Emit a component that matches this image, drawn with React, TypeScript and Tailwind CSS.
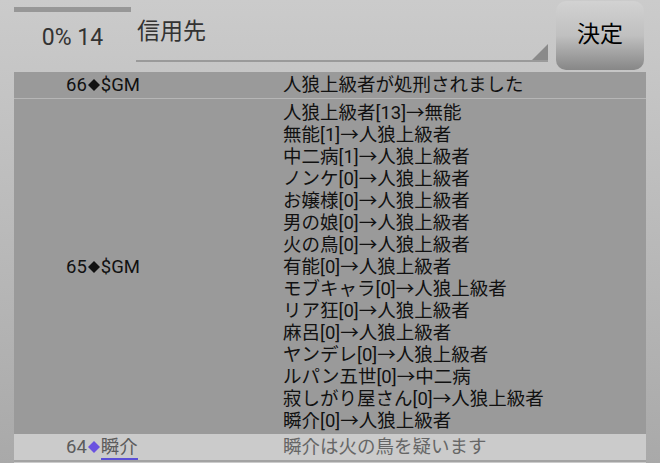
const VOTES = [
  "人狼上級者[13]→無能",
  "無能[1]→人狼上級者",
  "中二病[1]→人狼上級者",
  "ノンケ[0]→人狼上級者",
  "お嬢様[0]→人狼上級者",
  "男の娘[0]→人狼上級者",
  "火の鳥[0]→人狼上級者",
  "有能[0]→人狼上級者",
  "モブキャラ[0]→人狼上級者",
  "リア狂[0]→人狼上級者",
  "麻呂[0]→人狼上級者",
  "ヤンデレ[0]→人狼上級者",
  "ルパン五世[0]→中二病",
  "寂しがり屋さん[0]→人狼上級者",
  "瞬介[0]→人狼上級者",
];

const FONT = "font-['Roboto','Noto_Sans_CJK_JP',sans-serif]";

// small filled diamond used between the number and the speaker name
function Diamond({ className = "" }: { className?: string }) {
  return (
    <svg viewBox="0 0 12 12" className={`inline-block w-[12px] h-[12px] mx-px align-[0px] ${className}`}>
      <polygon points="6,0 12,6 6,12 0,6" fill="currentColor" />
    </svg>
  );
}

export default function App() {
  return (
    <div className={`w-[660px] h-[463px] overflow-hidden bg-gradient-to-b from-[#cbcbcb] to-[#a9a9a9] ${FONT}`}>
      {/* Header */}
      <div className="flex h-[72px] pl-[14px] pr-[16px]">
        <div className="w-[117px] flex flex-col">
          <div className="mt-[7px] h-[5px] bg-[#979797]" />
          <div className="mt-[11px] text-center text-[23px] leading-[30px] text-[#333]">0% 14</div>
        </div>
        <div className="relative ml-[5px] w-[412px] h-[62px] border-b-2 border-[#9a9a9a]">
          <div className="pt-[14px] pl-px text-[23px] leading-[36px] text-[#333]">信用先</div>
          <div className="absolute right-0 bottom-0 w-0 h-0 border-l-[16px] border-l-transparent border-b-[16px] border-b-[#8a8a8a]" />
        </div>
        <button className="ml-[8px] mt-px w-[88px] h-[69px] rounded-[10px] bg-gradient-to-b from-[#d2d2d2] via-[#c0c0c0] to-[#878787] text-[23px] text-black">
          決定
        </button>
      </div>

      {/* Log list */}
      <div className="mx-[14px] text-[18.5px] leading-[22px] text-[#111]">
        <div className="flex h-[26px] items-center bg-[#9a9a9a]">
          <div className="w-[269px] pl-[52px]">66<Diamond />$GM</div>
          <div>人狼上級者が処刑されました</div>
        </div>
        <div className="h-px bg-[#b6b6b6]" />
        <div className="flex items-center bg-[#9a9a9a] pt-[3px] pb-[2px]">
          <div className="w-[269px] pl-[52px]">65<Diamond />$GM</div>
          <div>
            {VOTES.map((v) => (
              <div key={v}>{v}</div>
            ))}
          </div>
        </div>
        <div className="flex h-[26px] items-center bg-[#cbcbcb] text-[#5c5c5c]">
          <div className="w-[269px] pl-[52px]">
            64<Diamond className="text-[#6a52e0]" />
            <span className="border-b-2 border-[#5b4fd6]">瞬介</span>
          </div>
          <div className="text-[#666]">瞬介は火の鳥を疑います</div>
        </div>
        <div className="h-[2px] bg-[#a3a3a3]" />
        <div className="h-[10px] bg-[#cbcbcb]" />
      </div>
    </div>
  );
}
